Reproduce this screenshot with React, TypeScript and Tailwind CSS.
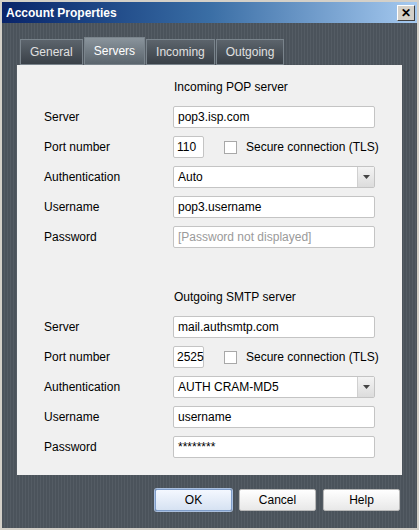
const font = { fontFamily: '"Liberation Sans", Arial, sans-serif' };

function Field({ value, muted }: { value: string; muted?: boolean }) {
  return (
    <div className={`w-[202px] h-[22px] bg-white border border-[#c4c4c4] rounded-[2px] px-1 flex items-center text-[12px] ${muted ? 'text-[#9a9a9a]' : 'text-black'}`}>
      {value}
    </div>
  );
}

function Select({ value }: { value: string }) {
  return (
    <div className="w-[202px] h-[22px] bg-white border border-[#c4c4c4] rounded-[2px] pl-1 flex items-center text-[12px]">
      <span className="flex-1">{value}</span>
      <span className="w-[17px] h-[20px] bg-gradient-to-b from-[#f4f4f4] to-[#dcdcdc] border-l border-[#d0d0d0] flex items-center justify-center">
        <svg width="7" height="4" viewBox="0 0 7 4"><path d="M0 0h7L3.5 4z" fill="#444" /></svg>
      </span>
    </div>
  );
}

function Port({ value }: { value: string }) {
  return (
    <div className="flex items-center">
      <div className="w-[31px] h-[22px] bg-white border border-[#c4c4c4] rounded-[2px] px-[3px] flex items-center text-[12px]">{value}</div>
      <div className="ml-[20px] w-[13px] h-[13px] bg-white border border-[#a8a8a8]" />
      <span className="ml-[9px] text-[12px]">Secure connection (TLS)</span>
    </div>
  );
}

function Row({ label, children }: { label: string; children: React.ReactNode }) {
  return (
    <div className="flex items-center h-[30px]">
      <span className="w-[129px] text-[12px]">{label}</span>
      {children}
    </div>
  );
}

function Section({ title, server, port, auth, user, pass, muted }: { title: string; server: string; port: string; auth: string; user: string; pass: string; muted?: boolean }) {
  return (
    <div className="pl-[27px]">
      <div className="h-[22px] pl-[130px] text-[12px] flex items-center">{title}</div>
      <div className="h-[4px]" />
      <Row label="Server"><Field value={server} /></Row>
      <Row label="Port number"><Port value={port} /></Row>
      <Row label="Authentication"><Select value={auth} /></Row>
      <Row label="Username"><Field value={user} /></Row>
      <Row label="Password"><Field value={pass} muted={muted} /></Row>
    </div>
  );
}

function Btn({ label, primary }: { label: string; primary?: boolean }) {
  return (
    <div className={`w-[77px] h-[22px] rounded-[2px] flex items-center justify-center text-[12px] bg-gradient-to-b ${primary ? 'from-[#f4f8ff] to-[#d6e2f2] border border-[#7f9dc9] shadow-[0_0_0_1px_#aac0e0]' : 'from-white to-[#e8e8e8] border border-[#b8b8b8]'}`}>
      {label}
    </div>
  );
}

export default function App() {
  const tabs = ['General', 'Servers', 'Incoming', 'Outgoing'];
  return (
    <div style={font} className="w-[419px] h-[530px] bg-[#d4d0c8] p-[2px] flex flex-col">
      <div className="h-[21px] bg-gradient-to-r from-[#0a246a] via-[#3a6ea5] to-[#a6caf0] flex items-center pl-[4px] pr-[2px]">
        <span className="flex-1 text-white font-bold text-[12px]">Account Properties</span>
        <div className="w-[18px] h-[16px] bg-[#d4d0c8] border border-t-white border-l-white border-r-[#404040] border-b-[#404040] flex items-center justify-center text-[12px] font-bold leading-none">✕</div>
      </div>
      <div className="flex-1 bg-[repeating-linear-gradient(90deg,#4b535b_0px,#4b535b_2px,#545c64_2px,#545c64_3px)] flex flex-col px-[15px]">
        <div className="flex mt-[14px] pl-[3px] h-[28px] items-end">
          {tabs.map((t) => (
            <div key={t} className={`${t === 'Servers' ? 'h-[28px] bg-gradient-to-b from-[#8a949c] to-[#5b656d] text-white' : 'h-[26px] bg-gradient-to-b from-[#5c646c] to-[#3a4148] text-[#e0e0e0]'} border border-[#7a848c] px-[9px] mr-[1px] flex items-center text-[12px]`}>
              {t}
            </div>
          ))}
        </div>
        <div className="h-[410px] bg-[#f0f0f0] pt-[11px]">
          <Section title="Incoming POP server" server="pop3.isp.com" port="110" auth="Auto" user="pop3.username" pass="[Password not displayed]" muted />
          <div className="h-[34px]" />
          <Section title="Outgoing SMTP server" server="mail.authsmtp.com" port="2525" auth="AUTH CRAM-MD5" user="username" pass="********" />
        </div>
        <div className="flex justify-end gap-[7px] mt-[14px] pr-[2px]">
          <Btn label="OK" primary />
          <Btn label="Cancel" />
          <Btn label="Help" />
        </div>
      </div>
    </div>
  );
}
